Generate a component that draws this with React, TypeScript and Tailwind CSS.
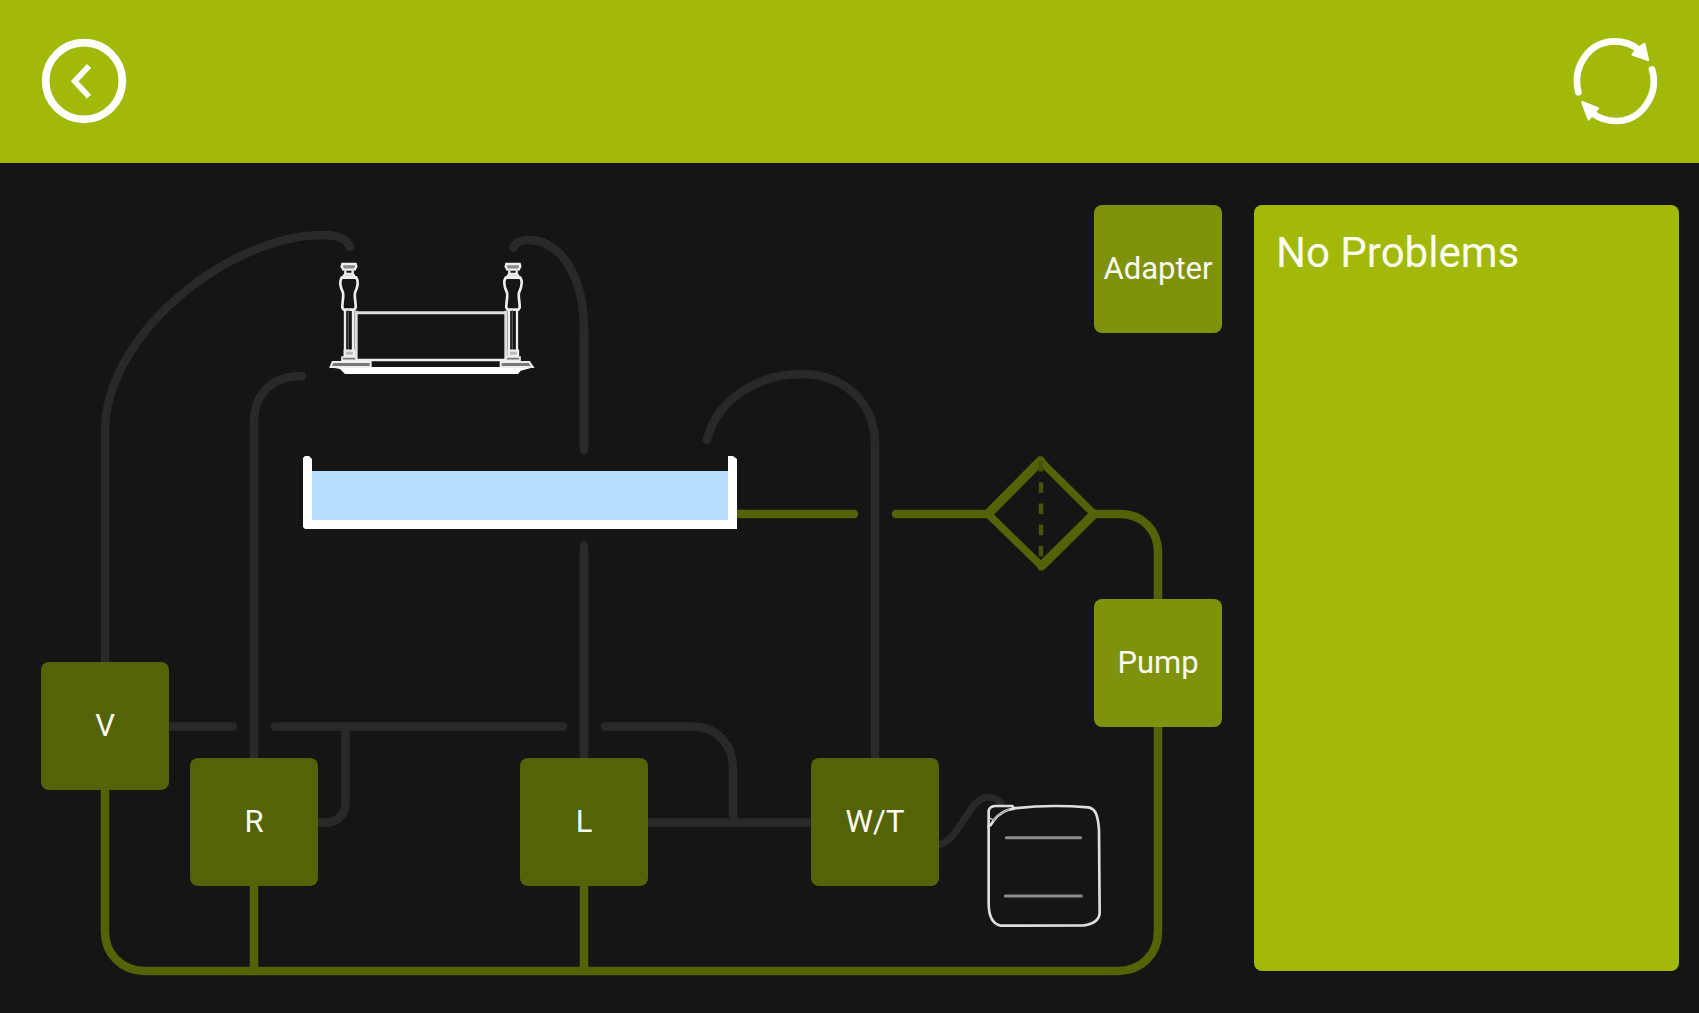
const nodes = [
  { label: 'Adapter', place: 'left-[1094px] top-[42px] bg-[#7f920e]' },
  { label: 'Pump', place: 'left-[1094px] top-[436px] bg-[#7f920e]' },
  { label: 'V', place: 'left-[41px] top-[499px] bg-[#546307]' },
  { label: 'R', place: 'left-[190px] top-[595px] bg-[#546307]' },
  { label: 'L', place: 'left-[520px] top-[595px] bg-[#546307]' },
  { label: 'W/T', place: 'left-[811px] top-[595px] bg-[#546307]' },
];

function BackIcon() {
  return (
    <svg viewBox="0 0 258 258" className="size-[86px]" fill="none" stroke="#fff" aria-hidden="true">
      <circle cx="129" cy="129" r="115" strokeWidth="23" />
      <path d="M144 84 101 130 144 176" strokeWidth="17" />
    </svg>
  );
}

function RefreshIcon() {
  return (
    <svg viewBox="66 54 258 258" className="size-[86px] overflow-visible" aria-hidden="true">
      <g fill="none" stroke="#fff" strokeWidth="20" strokeLinecap="round">
        <path d="M85 217C66 138 118 64 195 64 222 64 244 72 262 86" />
        <path d="M306 148C328 222 276 302 198 303 171 303 149 295 130 282" />
      </g>
      <g fill="#fff" stroke="#fff" strokeWidth="7" strokeLinejoin="round">
        <path d="M283 72 294 120 248 104 262 86Z" />
        <path d="M97 246 144 265 130 280 116 298Z" />
      </g>
    </svg>
  );
}

function Handle({ x }: { x: number }) {
  return (
    <g transform={`translate(${x} 0)`} fill="none" stroke="#eee" strokeWidth="7">
      <path d="M-20 132H20L22 140 17 149H-17L-22 140Z" fill="#888" />
      <path d="M-11 152V160M11 152V160" />
      <path d="M-12 161H12L20 172H-20Z" fill="#ddd" strokeWidth="5" />
      <path d="M-22 173H22C30 185 25 203 18 218 15 232 21 246 20 263L16 269H-16L-20 263C-21 246-15 232-18 218-25 203-30 185-22 173Z" strokeWidth="8" />
      <path d="M-12 271V392M12 271V392" />
      <path d="M-2 271V392" stroke="#555" strokeWidth="4" />
      <path d="M-13 392H15V408H-13Z" fill="#bbb" />
      <path d="M-21 411H21V421H-21Z" fill="#777" strokeWidth="5" />
    </g>
  );
}

function Rack() {
  return (
    <svg x="300" y="220" width="300" height="170" viewBox="0 0 900 510">
      <path d="M167 278H620" stroke="#ddd" strokeWidth="9" />
      <path d="M168 272V421M618 272V421" stroke="#ddd" strokeWidth="10" />
      <path d="M170 420H618" stroke="#eee" strokeWidth="8" />
      <Handle x={147} />
      <Handle x={639} />
      <path d="M88 441H704L662 452 654 462H135L120 447Z" fill="#fff" />
      <path d="M98 426H212V441H92Z" fill="#777" stroke="#eee" strokeWidth="6" />
      <path d="M602 426H688L698 441H602Z" fill="#777" stroke="#eee" strokeWidth="6" />
    </svg>
  );
}

function Canister() {
  return (
    <svg x="960" y="780" width="160" height="160" viewBox="0 0 480 480">
      <g fill="none" stroke="#dedede" strokeWidth="8" strokeLinejoin="round">
        <path d="M160 85C240 76 320 77 385 82 408 86 414 108 417 150L419 400C417 422 398 432 372 436L122 437C97 432 86 405 86 370V135" />
        <path d="M86 145V92C88 82 96 78 108 78H157L162 86 143 90C125 96 105 112 90 138" />
        <path d="M90 115 105 122M100 120C115 104 130 92 148 88" stroke="#aaa" strokeWidth="5" />
      </g>
      <path d="M139 173H362M136 348H364" stroke="#8c8c8c" strokeWidth="9" strokeLinecap="round" />
    </svg>
  );
}

function Pipes() {
  return (
    <svg viewBox="0 163 1254 850" className="h-[850px] w-[1254px] max-w-none" aria-hidden="true">
      <g fill="none" stroke="#292929" strokeWidth="8.5" strokeLinecap="round">
        <path d="M105 670V432C105 334 228 236 322 235 338 235 347 239 350 247" />
        <path d="M254 765V422C254 394 272 376 302 376" />
        <path d="M513 248C516 242 522 240 528 240 560 240 584 275 584 330V450" />
        <path d="M584 545V765" />
        <path d="M707 440C717 398 760 374 801 374 845 374 875 403 875 445V765" />
        <path d="M165 726.500H233M275 726.500H563" />
        <path d="M605 726.500H692C716 726.500 733 744 733 768V822" />
        <path d="M345.500 727V802C345.500 814 338 822.500 326 822.500H315" />
        <path d="M640 822.500H820" />
        <path d="M936 845C958 845 968 798 988 797 993 797 997 799 1001 803" strokeWidth="7" />
      </g>
      <g fill="none" stroke="#546307" strokeWidth="8.5" strokeLinecap="round">
        <path d="M105 785V932C105 954 122 971 145 971H1118C1141 971 1158 954 1158 932V720" />
        <path d="M254 880V971M584 880V971" />
        <path d="M738 514H854M896 514H988" />
        <path d="M1093 514H1120C1142 514 1158 530 1158 552V605" />
        <path d="M988 514 1040.500 461M1094 514 1041.500 566" strokeWidth="9.5" />
        <path d="M1040.500 461 1094 514M988 514 1041.500 566" strokeWidth="7.5" />
        <path d="M1041 461V562" stroke="#46530d" strokeWidth="4.5" strokeLinecap="butt" strokeDasharray="10.600" />
      </g>
      <path d="M311 471H729V521H311Z" fill="#b8deff" />
      <path
        d="M303 527V458L305 456H309L312 459V520H728V456H733L737 459V529H305Z"
        fill="#fff"
      />
      <Rack />
      <Canister />
    </svg>
  );
}

export default function App() {
  return (
    <div className="flex min-h-screen flex-col bg-[#151515] font-['Roboto',sans-serif] text-white">
      <header className="flex h-[163px] items-center justify-between bg-[#a2b90a] px-[41px] pb-0.5">
        <button type="button" aria-label="Back">
          <BackIcon />
        </button>
        <button type="button" aria-label="Refresh">
          <RefreshIcon />
        </button>
      </header>
      <main className="flex flex-1">
        <section aria-label="Hydraulic diagram" className="relative w-[1254px] shrink-0">
          <Pipes />
          {nodes.map((node) => (
            <button
              key={node.label}
              type="button"
              className={`absolute flex size-32 items-center justify-center rounded-lg text-[31px] leading-10 text-[#fafaf0] ${node.place}`}
            >
              {node.label}
            </button>
          ))}
        </section>
        <aside className="mt-[42px] mr-5 mb-[42px] min-w-0 flex-1 rounded-lg bg-[#a2b90a] px-[22px] py-[23px]">
          <p className="text-[42px] leading-[50px] text-[#fdfdf2]">No Problems</p>
        </aside>
      </main>
    </div>
  );
}
